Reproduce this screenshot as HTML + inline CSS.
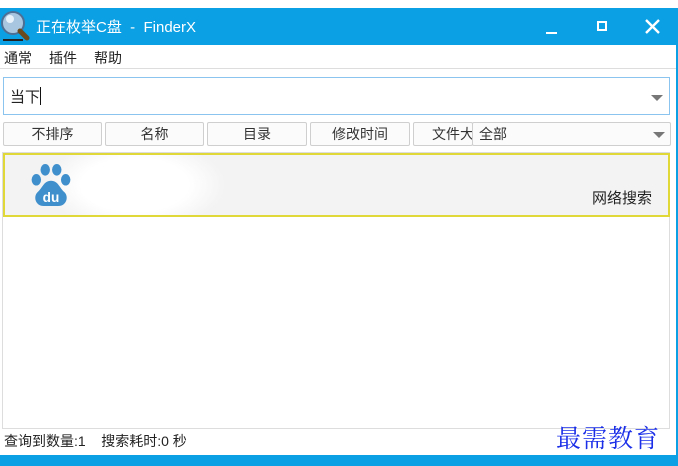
<!DOCTYPE html>
<html><head><meta charset="utf-8"><style>
*{margin:0;padding:0;box-sizing:border-box}
body{width:678px;height:466px;overflow:hidden;background:#fff;font-family:"Liberation Sans","Noto Sans CJK SC",sans-serif;font-size:14px;color:#222;position:relative}
.abs{position:absolute}
#title{left:0;top:8px;width:678px;height:37px;background:#0b9fe3;color:#fff}
#title .t{left:36px;top:8px;font-size:15px;white-space:pre}
.menu span{margin-right:17px}
.btn{position:absolute;top:122px;height:24px;border:1px solid #cfcfcf;background:#fbfbfb;text-align:center;line-height:22px;font-size:14px;color:#333;border-radius:2px}
.arrow{width:0;height:0;border-left:6px solid transparent;border-right:6px solid transparent;border-top:6px solid #777}
</style></head><body>
<div id="title" class="abs">
  <svg class="abs" style="left:0;top:2px" width="32" height="32" viewBox="0 0 32 32">
    <circle cx="13" cy="13" r="11" fill="#a8c6e0" stroke="#4d6f94" stroke-width="2"/>
    <circle cx="10" cy="9" r="4" fill="#e8f2fa"/>
    <path d="M20 21 L27 28" stroke="#6b4a1e" stroke-width="5" stroke-linecap="round"/>
    <rect x="3" y="29" width="20" height="2" fill="#222"/>
  </svg>
  <div class="abs t">正在枚举C盘  -  FinderX</div>
  <div class="abs" style="left:546px;top:24px;width:11px;height:2px;background:#fff"></div>
  <div class="abs" style="left:597px;top:13px;width:10px;height:10px;border:2px solid #fff"></div>
  <svg class="abs" style="left:645px;top:11px" width="15" height="15" viewBox="0 0 15 15"><path d="M1 1L14 14M14 1L1 14" stroke="#fff" stroke-width="2.4"/></svg>
</div>
<div class="abs menu" style="left:0;top:45px;width:676px;height:24px;border-bottom:1px solid #ddd;padding:3px 0 0 4px;font-size:14px"><span>通常</span><span>插件</span><span>帮助</span></div>
<div class="abs" style="left:3px;top:77px;width:667px;height:38px;border:1px solid #8cc4f0;padding:8px 0 0 6px;font-size:15px">当下<span style="display:inline-block;width:1px;height:18px;background:#111;vertical-align:-3px"></span>
  <div class="abs arrow" style="right:6px;top:17px"></div></div>
<div class="btn" style="left:3px;width:99px">不排序</div>
<div class="btn" style="left:105px;width:99px">名称</div>
<div class="btn" style="left:207px;width:100px">目录</div>
<div class="btn" style="left:310px;width:100px">修改时间</div>
<div class="btn" style="left:413px;width:60px;overflow:hidden;text-align:left;padding-left:18px;white-space:nowrap">文件大小</div>
<div class="btn" style="left:472px;width:199px;text-align:left;padding-left:6px">全部<div class="abs arrow" style="right:5px;top:9px"></div></div>
<div class="abs" style="left:2px;top:152px;width:668px;height:277px;border:1px solid #ddd"></div>
<div class="abs" style="left:3px;top:153px;width:667px;height:64px;border:2px solid #e0d838;background:radial-gradient(ellipse 90px 45px at 130px 30px,#fff 60%,#f3f3f3 100%)">
  <svg class="abs" style="left:24px;top:8px" width="44" height="44" viewBox="0 0 42 42">
    <g fill="#3f8fcc">
      <ellipse cx="7" cy="16" rx="4.5" ry="5.5"/><ellipse cx="15.5" cy="6.5" rx="4.5" ry="5.5"/>
      <ellipse cx="26.5" cy="6.5" rx="4.5" ry="5.5"/><ellipse cx="35" cy="16" rx="4.5" ry="5.5"/>
      <path d="M21 17 C14 17 13 24 8 28 C4 32 6 41 14 41 L28 41 C36 41 38 32 34 28 C29 24 28 17 21 17Z"/>
    </g>
    <text x="21" y="37" fill="#fff" font-size="13" font-weight="bold" text-anchor="middle" font-family="Liberation Sans">du</text>
  </svg>
  <div class="abs" style="right:16px;top:32px;font-size:15px">网络搜索</div>
</div>
<div class="abs" style="left:4px;top:431px;font-size:14px;white-space:pre">查询到数量:1    搜索耗时:0 秒</div>
<div class="abs" style="left:556px;top:419px;font-size:25px;color:#1a2ee8;font-family:'Noto Serif CJK SC',serif;letter-spacing:1px">最需教育</div>
<div class="abs" style="left:0;top:455px;width:678px;height:11px;background:#0b9fe3"></div>
<div class="abs" style="left:676px;top:8px;width:2px;height:458px;background:#0b9fe3"></div>
</body></html>
